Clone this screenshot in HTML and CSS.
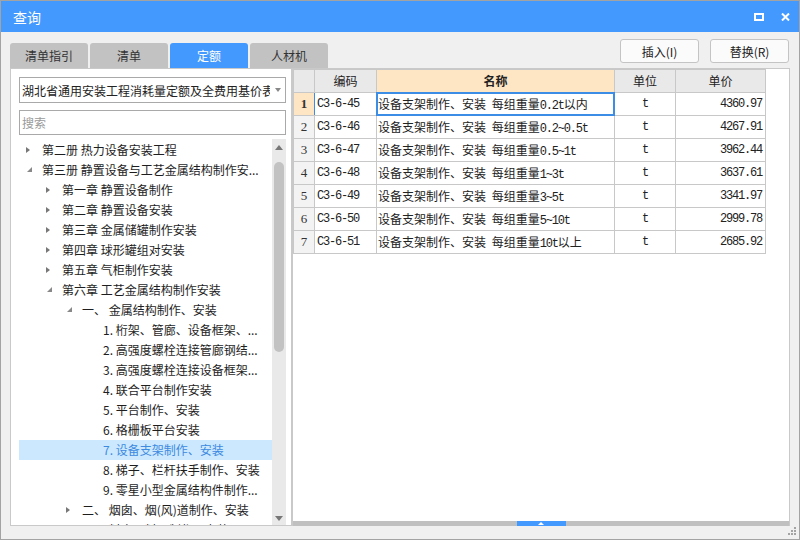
FILE: index.html
```html
<!DOCTYPE html>
<html lang="zh-CN">
<head>
<meta charset="utf-8">
<title>查询</title>
<link rel="stylesheet" href="styles.css">
</head>
<body>
<div class="win">
  <div class="titlebar">
    <span class="title">查询</span>
    <div class="winbtns">
      <svg class="ico" width="10" height="8" viewBox="0 0 10 8"><rect x="1" y="1" width="8" height="6" fill="none" stroke="#fff" stroke-width="2"/></svg>
      <svg class="ico" width="9" height="8" viewBox="0 0 9 8"><path d="M1 0.5 L8 7.5 M8 0.5 L1 7.5" stroke="#fff" stroke-width="2"/></svg>
    </div>
  </div>
  <div class="body">
    <div class="toolbar">
      <div class="tabs">
        <div class="tab">清单指引</div>
        <div class="tab">清单</div>
        <div class="tab active">定额</div>
        <div class="tab">人材机</div>
      </div>
      <div class="actions">
        <button class="btn">插入(I)</button>
        <button class="btn">替换(R)</button>
      </div>
    </div>
    <div class="main">
      <div class="left">
        <div class="select">
          <span class="select-text">湖北省通用安装工程消耗量定额及全费用基价表</span>
          <i class="select-arrow"></i>
        </div>
        <div class="search">搜索</div>
        <div class="treewrap">
          <div class="tree">
            <div class="row l1"><i class="tg c"></i><span>第二册 热力设备安装工程</span></div>
            <div class="row l1"><i class="tg e"></i><span>第三册 静置设备与工艺金属结构制作安...</span></div>
            <div class="row l2"><i class="tg c"></i><span>第一章 静置设备制作</span></div>
            <div class="row l2"><i class="tg c"></i><span>第二章 静置设备安装</span></div>
            <div class="row l2"><i class="tg c"></i><span>第三章 金属储罐制作安装</span></div>
            <div class="row l2"><i class="tg c"></i><span>第四章 球形罐组对安装</span></div>
            <div class="row l2"><i class="tg c"></i><span>第五章 气柜制作安装</span></div>
            <div class="row l2"><i class="tg e"></i><span>第六章 工艺金属结构制作安装</span></div>
            <div class="row l3"><i class="tg e"></i><span>一、 金属结构制作、安装</span></div>
            <div class="row l4"><span>1. 桁架、管廊、设备框架、...</span></div>
            <div class="row l4"><span>2. 高强度螺栓连接管廊钢结...</span></div>
            <div class="row l4"><span>3. 高强度螺栓连接设备框架...</span></div>
            <div class="row l4"><span>4. 联合平台制作安装</span></div>
            <div class="row l4"><span>5. 平台制作、安装</span></div>
            <div class="row l4"><span>6. 格栅板平台安装</span></div>
            <div class="row l4 selected"><span>7. 设备支架制作、安装</span></div>
            <div class="row l4"><span>8. 梯子、栏杆扶手制作、安装</span></div>
            <div class="row l4"><span>9. 零星小型金属结构件制作...</span></div>
            <div class="row l3"><i class="tg c"></i><span>二、 烟囱、烟(风)道制作、安装</span></div>
            <div class="row l3"><i class="tg c"></i><span>三、 料仓、料斗制作、安装</span></div>
          </div>
          <div class="vscroll">
            <i class="arr up"></i>
            <div class="thumb"></div>
            <i class="arr down"></i>
          </div>
        </div>
      </div>
      <div class="right">
        <div class="grid">
          <div class="c h"></div>
          <div class="c h">编码</div>
          <div class="c h name">名称</div>
          <div class="c h">单位</div>
          <div class="c h">单价</div>

          <div class="c rn cur">1</div>
          <div class="c code">C3-6-45</div>
          <div class="c nm sel">设备支架制作、安装 每组重量<span class="a">0.2t</span>以内</div>
          <div class="c unit">t</div>
          <div class="c price">4360.97</div>

          <div class="c rn">2</div>
          <div class="c code">C3-6-46</div>
          <div class="c nm">设备支架制作、安装 每组重量<span class="a">0.2~0.5t</span></div>
          <div class="c unit">t</div>
          <div class="c price">4267.91</div>

          <div class="c rn">3</div>
          <div class="c code">C3-6-47</div>
          <div class="c nm">设备支架制作、安装 每组重量<span class="a">0.5~1t</span></div>
          <div class="c unit">t</div>
          <div class="c price">3962.44</div>

          <div class="c rn">4</div>
          <div class="c code">C3-6-48</div>
          <div class="c nm">设备支架制作、安装 每组重量<span class="a">1~3t</span></div>
          <div class="c unit">t</div>
          <div class="c price">3637.61</div>

          <div class="c rn">5</div>
          <div class="c code">C3-6-49</div>
          <div class="c nm">设备支架制作、安装 每组重量<span class="a">3~5t</span></div>
          <div class="c unit">t</div>
          <div class="c price">3341.97</div>

          <div class="c rn">6</div>
          <div class="c code">C3-6-50</div>
          <div class="c nm">设备支架制作、安装 每组重量<span class="a">5~10t</span></div>
          <div class="c unit">t</div>
          <div class="c price">2999.78</div>

          <div class="c rn">7</div>
          <div class="c code">C3-6-51</div>
          <div class="c nm">设备支架制作、安装 每组重量<span class="a">10t</span>以上</div>
          <div class="c unit">t</div>
          <div class="c price">2685.92</div>
        </div>
        <div class="hbar"><div class="hthumb"><i class="harr"></i></div></div>
      </div>
    </div>
  </div>
  <svg class="grip" width="9" height="9" viewBox="0 0 9 9" fill="#a3a3a3">
    <rect x="6" y="0" width="2" height="2"/>
    <rect x="3" y="3" width="2" height="2"/><rect x="6" y="3" width="2" height="2"/>
    <rect x="0" y="6" width="2" height="2"/><rect x="3" y="6" width="2" height="2"/><rect x="6" y="6" width="2" height="2"/>
  </svg>
</div>
</body>
</html>
```
FILE: styles.css
```css
* { box-sizing: border-box; margin: 0; padding: 0; }
body {
  margin: 0;
  font-family: "Noto Sans CJK SC", "Microsoft YaHei", sans-serif;
  font-size: 12px;
  color: #222;
  background: #fff;
}
.win {
  position: relative;
  width: 800px;
  height: 540px;
  border: 1px solid #a3a3a3;
  background: #f0f0f0;
  display: flex;
  flex-direction: column;
  overflow: hidden;
}
.titlebar {
  height: 31px;
  flex: none;
  background: #4499ff;
  color: #fff;
  display: flex;
  align-items: center;
  padding: 0 9px 0 12px;
}
.title { font-size: 14px; line-height: 20px; }
.winbtns { margin-left: auto; display: flex; align-items: center; gap: 17px; }
.ico { display: block; }

.body {
  flex: 1;
  display: flex;
  flex-direction: column;
  padding: 0 0 13px 9px;
  min-height: 0;
}
.toolbar { height: 36px; flex: none; display: flex; }
.tabs { display: flex; gap: 2px; align-self: flex-end; }
.tab {
  width: 78px;
  height: 25px;
  line-height: 25px;
  text-align: center;
  background: #c2c2c2;
  border-radius: 3px 3px 0 0;
  color: #333;
}
.tab.active { background: #4499ff; color: #fff; }
.actions { margin: 7px 10px 0 auto; display: flex; gap: 11px; align-self: flex-start; }
.btn {
  width: 79px;
  height: 24px;
  border: 1px solid #c4c4c4;
  border-radius: 3px;
  background: #fbfbfb;
  font-family: inherit;
  font-size: 12px;
  color: #222;
}

.main { flex: 1; display: flex; min-height: 0; }
.left {
  width: 282px;
  flex: none;
  background: #fff;
  border: 1px solid #c9c9c9;
  display: flex;
  flex-direction: column;
  padding: 8px 5px 0 8px;
}
.select {
  height: 26px;
  flex: none;
  border: 1px solid #a9a9a9;
  display: flex;
  align-items: center;
  padding-left: 2px;
}
.select-text { flex: 1; white-space: nowrap; overflow: hidden; color: #222; }
.select-arrow {
  flex: none;
  width: 0; height: 0;
  margin: 0 4px 0 5px;
  border-left: 3.5px solid transparent;
  border-right: 3.5px solid transparent;
  border-top: 4px solid #888;
}
.search {
  margin-top: 7px;
  height: 25px;
  flex: none;
  border: 1px solid #a9a9a9;
  color: #9a9a9a;
  line-height: 23px;
  padding-left: 2px;
}
.treewrap { margin-top: 4px; flex: 1; display: flex; min-height: 0; overflow: hidden; }
.tree { flex: 1; padding-top: 1px; overflow: hidden; }
.row {
  height: 20px;
  display: flex;
  align-items: center;
  white-space: nowrap;
  line-height: 20px;
  color: #1e1e1e;
}
.row.l1 { padding-left: 7px; }
.row.l2 { padding-left: 27px; }
.row.l3 { padding-left: 47px; }
.row.l4 { padding-left: 84px; }
.row.selected { background: #cce8ff; color: #3d8ae0; }
.tg { flex: none; width: 16px; height: 20px; display: flex; align-items: center; }
.tg.c::before {
  content: "";
  border-left: 4px solid #777;
  border-top: 3.5px solid transparent;
  border-bottom: 3.5px solid transparent;
}
.tg.e::before {
  content: "";
  margin: 0 0 1px 1px;
  border-bottom: 5px solid #888;
  border-left: 5px solid transparent;
}
.vscroll {
  width: 14px;
  flex: none;
  background: #e9e9e9;
  display: flex;
  flex-direction: column;
  align-items: center;
}
.arr { width: 0; height: 0; border-left: 4.5px solid transparent; border-right: 4.5px solid transparent; }
.arr.up { margin-top: 6px; border-bottom: 5px solid #777; }
.arr.down { margin-top: auto; margin-bottom: 4px; border-top: 5px solid #777; }
.thumb { margin-top: 12px; width: 10px; height: 190px; border-radius: 5px; background: #c2c2c2; }

.right {
  width: 498px;
  flex: none;
  background: #fff;
  border: 1px solid #c9c9c9;
  border-bottom: none;
  display: flex;
  flex-direction: column;
}
.grid {
  display: grid;
  grid-template-columns: 20px 61px 237px 60px 89px;
  grid-auto-rows: 22px;
  gap: 1px;
  background: #c8c8c8;
  border: 1px solid #c8c8c8;
  width: max-content;
}
.c { background: #fff; line-height: 22px; white-space: nowrap; overflow: hidden; }
.h { background: #e9e9e9; text-align: center; color: #222; }
.h.name { background: #fee6c5; font-weight: bold; }
.rn { background: #f3f3f3; text-align: center; font-family: "Liberation Serif", serif; font-size: 13px; color: #333; }
.rn.cur { background: #fee6c5; font-weight: bold; box-shadow: 1px 0 0 #3c8de6; }
.code, .unit, .price, .a {
  font-family: "Liberation Mono", monospace;
  font-size: 12px;
  letter-spacing: -1.2px;
}
.code { padding-left: 2px; }
.nm { padding-left: 1px; word-spacing: 3px; }
.nm.sel { box-shadow: 0 0 0 1px #3c8de6, inset 0 0 0 1px #3c8de6; }
.unit { text-align: center; }
.price { text-align: right; padding-right: 3px; }

.hbar {
  margin-top: auto;
  height: 5px;
  background: #c0c0c0;
  display: flex;
  justify-content: center;
}
.hthumb { width: 49px; background: #4499ff; display: flex; justify-content: center; align-items: center; }
.harr { width: 0; height: 0; border-left: 3.5px solid transparent; border-right: 3.5px solid transparent; border-bottom: 3px solid #fff; }
.grip { position: absolute; right: 2px; bottom: 3px; }
```
